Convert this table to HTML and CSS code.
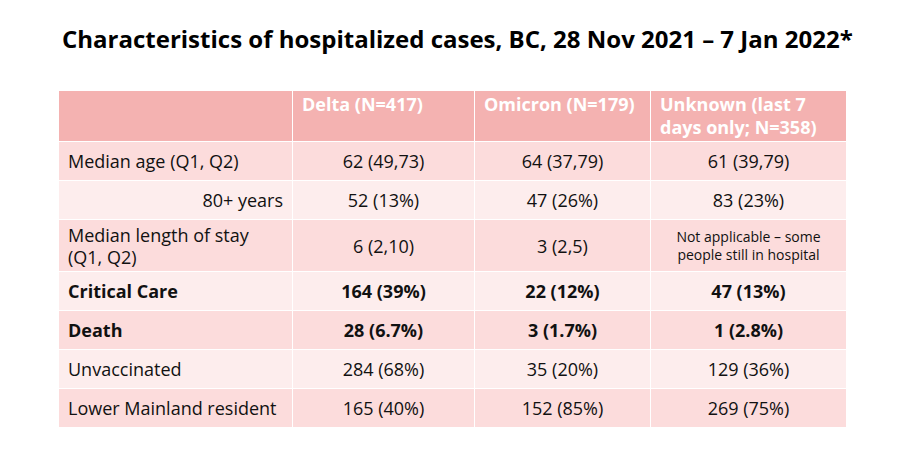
FILE: index.html
```html
<!DOCTYPE html>
<html lang="en">
<head>
<meta charset="utf-8">
<title>Characteristics of hospitalized cases</title>
<link rel="stylesheet" href="styles.css">
</head>
<body>
<main class="slide">
  <h1 class="title">Characteristics of hospitalized cases, BC, 28 Nov 2021 – 7 Jan 2022*</h1>
  <table class="cases">
    <colgroup>
      <col class="c-label">
      <col class="c-delta">
      <col class="c-omicron">
      <col class="c-unknown">
    </colgroup>
    <thead>
      <tr class="head">
        <th></th>
        <th>Delta (N=417)</th>
        <th>Omicron (N=179)</th>
        <th>Unknown (last 7 days only; N=358)</th>
      </tr>
    </thead>
    <tbody>
      <tr class="dark">
        <td class="label">Median age (Q1, Q2)</td>
        <td>62 (49,73)</td>
        <td>64 (37,79)</td>
        <td>61 (39,79)</td>
      </tr>
      <tr class="light">
        <td class="label right">80+ years</td>
        <td>52 (13%)</td>
        <td>47 (26%)</td>
        <td>83 (23%)</td>
      </tr>
      <tr class="dark tall">
        <td class="label">Median length of stay (Q1, Q2)</td>
        <td>6 (2,10)</td>
        <td>3 (2,5)</td>
        <td class="small">Not applicable – some people still in hospital</td>
      </tr>
      <tr class="light bold">
        <td class="label">Critical Care</td>
        <td>164 (39%)</td>
        <td>22 (12%)</td>
        <td>47 (13%)</td>
      </tr>
      <tr class="dark bold">
        <td class="label">Death</td>
        <td>28 (6.7%)</td>
        <td>3 (1.7%)</td>
        <td>1 (2.8%)</td>
      </tr>
      <tr class="light">
        <td class="label">Unvaccinated</td>
        <td>284 (68%)</td>
        <td>35 (20%)</td>
        <td>129 (36%)</td>
      </tr>
      <tr class="dark">
        <td class="label">Lower Mainland resident</td>
        <td>165 (40%)</td>
        <td>152 (85%)</td>
        <td>269 (75%)</td>
      </tr>
    </tbody>
  </table>
</main>
</body>
</html>
```

FILE: styles.css
```css
html, body {
  margin: 0;
  padding: 0;
  background: #ffffff;
}

body {
  font-family: "Open Sans", "Noto Sans", "DejaVu Sans", sans-serif;
  color: #111111;
}

.slide {
  width: 912px;
  height: 463px;
  padding: 22px 0 0 58px;
  box-sizing: border-box;
}

.title {
  margin: 0 0 34px 4px;
  font-size: 24px;
  font-weight: 700;
  line-height: 34px;
  color: #000000;
  white-space: nowrap;
}

.cases {
  border-collapse: separate;
  border-spacing: 1px;
  table-layout: fixed;
  width: 789px;
  font-size: 18px;
}

.c-label { width: 233px; }
.c-delta { width: 181px; }
.c-omicron { width: 175px; }
.c-unknown { width: 195px; }

.head th {
  background: #f4b2b1;
  color: #ffffff;
  font-weight: 700;
  text-align: left;
  vertical-align: top;
  height: 50px;
  padding: 2px 8px 0 9px;
  line-height: 23px;
  box-sizing: border-box;
}

td {
  text-align: center;
  vertical-align: middle;
  height: 38px;
  padding: 0 9px;
  line-height: 22px;
  box-sizing: border-box;
}

.tall td {
  height: 51px;
}

td.label {
  text-align: left;
}

td.label.right {
  text-align: right;
}

.dark td { background: #fcdcdc; }
.light td { background: #fdeded; }

.bold td { font-weight: 700; }

td.small {
  font-size: 14px;
  line-height: 18px;
  padding: 0 6px;
}
```
